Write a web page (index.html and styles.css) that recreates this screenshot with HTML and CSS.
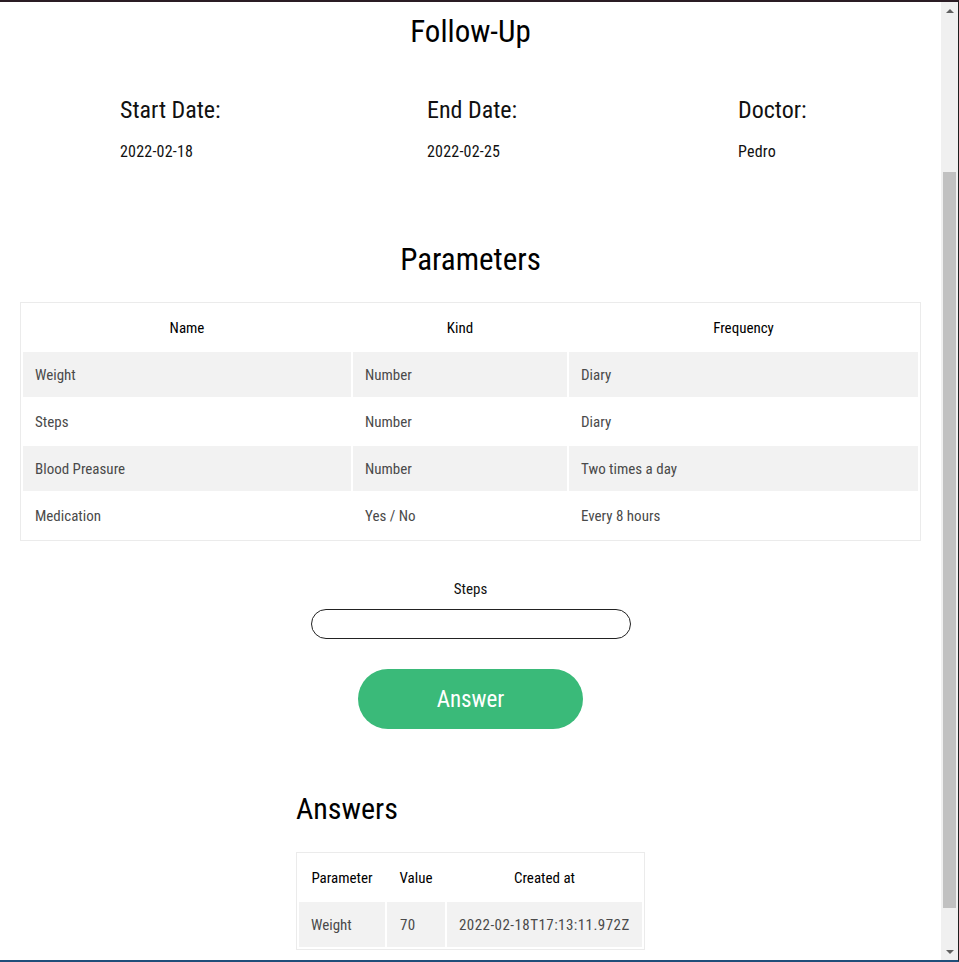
FILE: index.html
```html
<!DOCTYPE html>
<html lang="en">
<head>
<meta charset="utf-8">
<title>Follow-Up</title>
<link rel="stylesheet" href="styles.css">
</head>
<body>
<div class="window">
  <main class="page">
    <h1 class="page-title">Follow-Up</h1>

    <section class="details">
      <div class="detail">
        <h3 class="detail-label">Start Date:</h3>
        <p class="detail-value">2022-02-18</p>
      </div>
      <div class="detail">
        <h3 class="detail-label">End Date:</h3>
        <p class="detail-value">2022-02-25</p>
      </div>
      <div class="detail">
        <h3 class="detail-label">Doctor:</h3>
        <p class="detail-value">Pedro</p>
      </div>
    </section>

    <h2 class="section-title">Parameters</h2>
    <table class="data-table params">
      <thead>
        <tr>
          <th class="col-name">Name</th>
          <th class="col-kind">Kind</th>
          <th class="col-freq">Frequency</th>
        </tr>
      </thead>
      <tbody>
        <tr><td>Weight</td><td>Number</td><td>Diary</td></tr>
        <tr><td>Steps</td><td>Number</td><td>Diary</td></tr>
        <tr><td>Blood Preasure</td><td>Number</td><td>Two times a day</td></tr>
        <tr><td>Medication</td><td>Yes / No</td><td>Every 8 hours</td></tr>
      </tbody>
    </table>

    <form class="answer-form">
      <label class="answer-label" for="steps">Steps</label>
      <input class="answer-input" id="steps" type="text">
      <button class="answer-btn" type="button">Answer</button>
    </form>

    <section class="answers">
      <h2 class="answers-title">Answers</h2>
      <table class="data-table answers-table">
        <thead>
          <tr>
            <th class="col-param">Parameter</th>
            <th class="col-value">Value</th>
            <th class="col-created">Created at</th>
          </tr>
        </thead>
        <tbody>
          <tr><td>Weight</td><td class="num-cell">70</td><td class="date-cell">2022-02-18T17:13:11.972Z</td></tr>
        </tbody>
      </table>
    </section>
  </main>

  <div class="scrollbar">
    <div class="sb-btn"><span class="sb-arrow-up"></span></div>
    <div class="sb-track">
      <div class="sb-thumb"></div>
    </div>
    <div class="sb-btn"><span class="sb-arrow-down"></span></div>
  </div>
</div>
</body>
</html>
```

FILE: styles.css
```css
* {
  box-sizing: border-box;
  margin: 0;
  padding: 0;
}

html, body {
  height: 100%;
  overflow: hidden;
}

body {
  background: #ffffff;
  font-family: "Liberation Sans Narrow", "Roboto Condensed", "DejaVu Sans Condensed", "Liberation Sans", sans-serif;
  color: #000;
}

.window {
  display: flex;
  height: 962px;
  border-top: 2px solid #2a1c24;
  border-bottom: 2px solid #1f4e7a;
  border-right: 1px solid #1e1e1e;
}

.page {
  flex: 1;
  min-width: 0;
  padding: 10px 20px 0;
  overflow: hidden;
}

.page-title {
  font-size: 31px;
  line-height: 40px;
  font-weight: normal;
  text-align: center;
  color: #000;
}

.details {
  display: grid;
  grid-template-columns: 307px 311px auto;
  padding-left: 100px;
  margin-top: 43px;
}

.detail-label {
  font-size: 24px;
  line-height: 30px;
  font-weight: normal;
  color: #111;
}

.detail-value {
  margin-top: 16px;
  font-size: 16px;
  line-height: 22px;
  letter-spacing: 0.2px;
  color: #111;
}

.section-title {
  margin-top: 77px;
  font-size: 31px;
  line-height: 40px;
  font-weight: normal;
  text-align: center;
  color: #000;
}

.data-table {
  border: 1px solid #ebebeb;
  border-spacing: 2px;
  table-layout: fixed;
  font-size: 15px;
}

.data-table th,
.data-table td {
  height: 45px;
  padding: 0 12px;
  vertical-align: middle;
  white-space: nowrap;
}

.data-table th {
  font-weight: normal;
  color: #000;
  text-align: center;
}

.data-table td {
  color: #4a4a4a;
  text-align: left;
}

.data-table tbody tr:nth-child(odd) td {
  background: #f2f2f2;
}

.params {
  width: 901px;
  margin-top: 22px;
}

.col-name { width: 328px; }
.col-kind { width: 214px; }
.col-freq { width: 349px; }

.answer-form {
  display: flex;
  flex-direction: column;
  align-items: center;
  margin-top: 38px;
}

.answer-label {
  font-size: 15px;
  line-height: 20px;
  color: #111;
}

.answer-input {
  margin-top: 10px;
  width: 320px;
  height: 30px;
  border: 1px solid #222;
  border-radius: 15px;
  background: #fff;
  padding: 0 14px;
  font: inherit;
  outline: none;
}

.answer-btn {
  margin-top: 30px;
  width: 225px;
  height: 60px;
  border: none;
  border-radius: 30px;
  background: #3aba79;
  color: #fff;
  font-family: inherit;
  font-size: 23px;
  cursor: pointer;
}

.answers {
  width: fit-content;
  margin: 60px auto 0;
}

.answers-title {
  font-size: 30px;
  line-height: 40px;
  font-weight: normal;
  color: #000;
}

.answers-table {
  width: 349px;
  margin-top: 23px;
}

.answers-table .num-cell {
  padding-left: 13px;
  letter-spacing: 0.4px;
}

.answers-table .date-cell {
  letter-spacing: 0.45px;
}

.col-param { width: 86px; }
.col-value { width: 58px; }
.col-created { width: 195px; }

.scrollbar {
  width: 17px;
  flex: none;
  display: flex;
  flex-direction: column;
  background: #f0f0f0;
}

.sb-btn {
  height: 17px;
  flex: none;
  display: flex;
  align-items: center;
  justify-content: center;
}

.sb-arrow-up,
.sb-arrow-down {
  width: 0;
  height: 0;
  border-left: 4px solid transparent;
  border-right: 4px solid transparent;
}

.sb-arrow-up {
  border-bottom: 4px solid #606060;
}

.sb-arrow-down {
  border-top: 4px solid #606060;
}

.sb-track {
  flex: 1;
  padding: 153px 2px 0;
}

.sb-thumb {
  height: 736px;
  background: #c1c1c1;
}
```
